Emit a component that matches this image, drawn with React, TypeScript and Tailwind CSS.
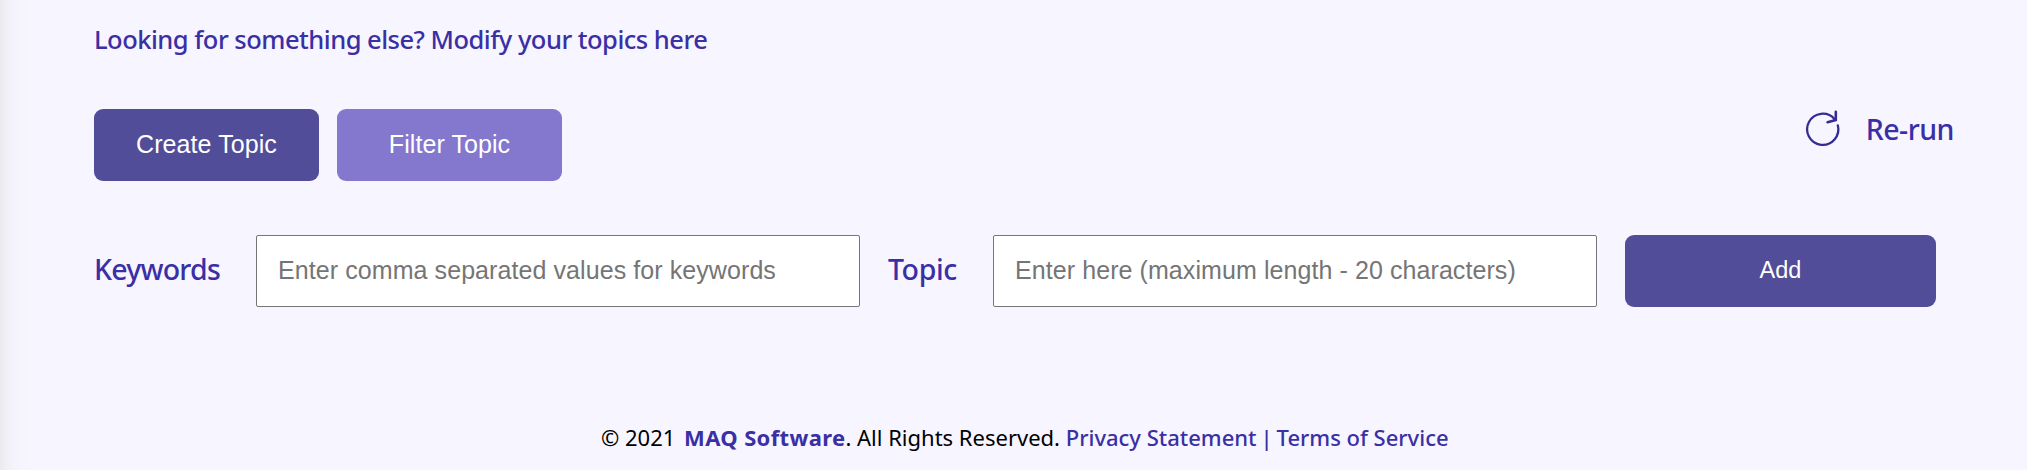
const label = "font-['Noto_Sans',sans-serif] font-medium text-[#3a2fa5] whitespace-nowrap";
const button =
  "flex h-[72px] items-center justify-center rounded-[9px] font-['Liberation_Sans',sans-serif] text-white";
const field =
  "h-[72px] w-[604px] rounded-[2px] border border-[#767676] bg-white px-[21px] pb-[2px] font-['Liberation_Sans',sans-serif] text-[25px] tracking-[0.08px] text-black outline-none placeholder:text-[#757575] placeholder:opacity-100";

function RefreshIcon() {
  return (
    <svg width="50" height="50" viewBox="0 0 50 50" fill="none" stroke="#352c93" strokeWidth="2.3" strokeLinecap="round">
      <path d="M41.8 21.3A15.6 15.6 0 1 1 38.6 15.2" />
      <path d="M39.8 7.8V15.9L31.6 18.2" strokeWidth="2.6" />
    </svg>
  );
}

export default function App() {
  return (
    <div className="flex h-[470px] w-full bg-[#f7f5ff]">
      <div className="w-[30px] shrink-0 bg-[linear-gradient(to_right,#ebeaef_0px,#f0eff5_6px,#f4f2fb_13px,#f7f5ff_28px)]" />
      <main className="flex min-w-0 flex-1 flex-col pl-16">
        <h2 className={`${label} mt-[19px] text-[25.5px] leading-[40px] tracking-[-0.51px]`}>
          Looking for something else? Modify your topics here
        </h2>

        <div className="mt-[50px] flex">
          <button className={`${button} w-[225px] bg-[#524d99] text-[25px] tracking-[0.08px]`}>Create Topic</button>
          <button className={`${button} ml-[18px] w-[225px] bg-[#8378cd] text-[25px] tracking-[0.08px]`}>Filter Topic</button>
          <button className="mt-[-5px] mr-[73px] ml-auto flex h-[50px] items-center">
            <RefreshIcon />
            <span className={`${label} ml-[20px] text-[28.5px] leading-[50px] tracking-[-0.5px]`}>Re-run</span>
          </button>
        </div>

        <div className="mt-[54px] flex items-center">
          <label className={`${label} w-[162px] pb-1 text-[28.5px] tracking-[-0.78px]`}>Keywords</label>
          <input className={field} placeholder="Enter comma separated values for keywords" />
          <label className={`${label} w-[133px] pb-1 pl-[28px] text-[28.5px] tracking-[-0.4px]`}>Topic</label>
          <input className={field} placeholder="Enter here (maximum length - 20 characters)" />
          <button className={`${button} ml-[28px] w-[311px] bg-[#524d99] text-[23.5px]`}>Add</button>
        </div>

        <footer className="mt-[110px] flex pl-[507px] font-['Noto_Sans',sans-serif] text-[22px] leading-[40px] whitespace-pre text-black">
          <span>© 2021 </span>
          <a className="ml-[3px] font-bold tracking-[0.35px] text-[#3a2fa5]">MAQ Software</a>
          <span>. All Rights Reserved. </span>
          <a className={label}>Privacy Statement</a>
          <span className={`${label} w-[20px] text-center`}>|</span>
          <a className={label}>Terms of Service</a>
        </footer>
      </main>
    </div>
  );
}
